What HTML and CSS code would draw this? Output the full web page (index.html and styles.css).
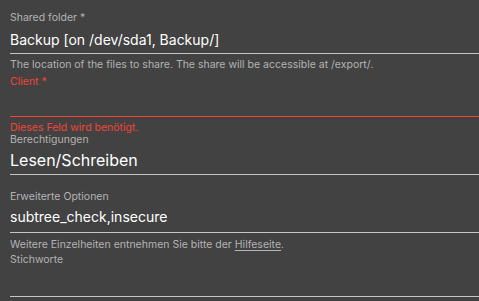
FILE: index.html
```html
<!DOCTYPE html>
<html lang="de">
<head>
<meta charset="utf-8">
<link rel="stylesheet" href="styles.css">
</head>
<body>
<form class="form">
  <div class="field">
    <div class="label">Shared folder *</div>
    <div class="control">
      <div class="value">Backup [on /dev/sda1, Backup/]</div>
    </div>
    <div class="hint">The location of the files to share. The share will be accessible at /export/.</div>
  </div>

  <div class="field field-client">
    <div class="label label-error">Client *</div>
    <div class="control control-error">
      <div class="empty empty-client"></div>
    </div>
    <div class="error">Dieses Feld wird benötigt.</div>
  </div>

  <div class="field field-perm">
    <div class="label label-tight">Berechtigungen</div>
    <div class="control">
      <div class="value value-select">Lesen/Schreiben</div>
    </div>
  </div>

  <div class="field field-opts">
    <div class="label label-small">Erweiterte Optionen</div>
    <div class="control control-opts">
      <div class="value">subtree_check,insecure</div>
    </div>
    <div class="hint hint-opts">Weitere Einzelheiten entnehmen Sie bitte der <a class="link" href="#">Hilfeseite</a>.</div>
  </div>

  <div class="field field-tags">
    <div class="label">Stichworte</div>
    <div class="control">
      <div class="empty empty-tags"></div>
    </div>
  </div>
</form>
</body>
</html>
```

FILE: styles.css
```css
html, body {
  margin: 0;
  padding: 0;
  background: #424242;
  height: 100%;
  overflow: hidden;
}

body {
  font-family: Inter, "Noto Sans", sans-serif;
  color: #ffffff;
}

.form {
  padding: 11px 0 0 10px;
}

.label {
  font-size: 10.5px;
  line-height: 14px;
  color: #b3b3b3;
}

.label-error {
  color: #f44336;
}

.label-small {
  line-height: 12px;
}

.label-tight {
  line-height: 12px;
}

.control {
  border-bottom: 1px solid #c6c6c6;
  padding-bottom: 3px;
}

.control-error {
  border-bottom: 1px solid #f44336;
  padding-bottom: 0;
}

.value {
  margin-top: 5px;
  font-size: 14px;
  line-height: 20px;
  color: #ffffff;
}

.value-select {
  font-size: 16px;
}

.empty-client {
  height: 27px;
}

.empty-tags {
  height: 29px;
}

.field-tags .control {
  padding-bottom: 0;
}

.hint {
  margin-top: 4px;
  font-size: 10.5px;
  line-height: 14px;
  color: #b3b3b3;
}

.field-client {
  margin-top: 3px;
}

.error {
  margin-top: 5px;
  font-size: 10.5px;
  line-height: 12px;
  color: #f44336;
}

.field-perm .value {
  margin-top: 4px;
}

.field-perm .control {
  padding-bottom: 4px;
}

.field-opts {
  margin-top: 16px;
}

.field-opts .value {
  margin-top: 4px;
}

.control-opts {
  padding-bottom: 5px;
}

.hint-opts {
  margin-top: 5px;
}

.field-tags {
  margin-top: 1px;
}

.link {
  color: inherit;
  text-decoration: underline;
  text-underline-offset: 2px;
}
```
